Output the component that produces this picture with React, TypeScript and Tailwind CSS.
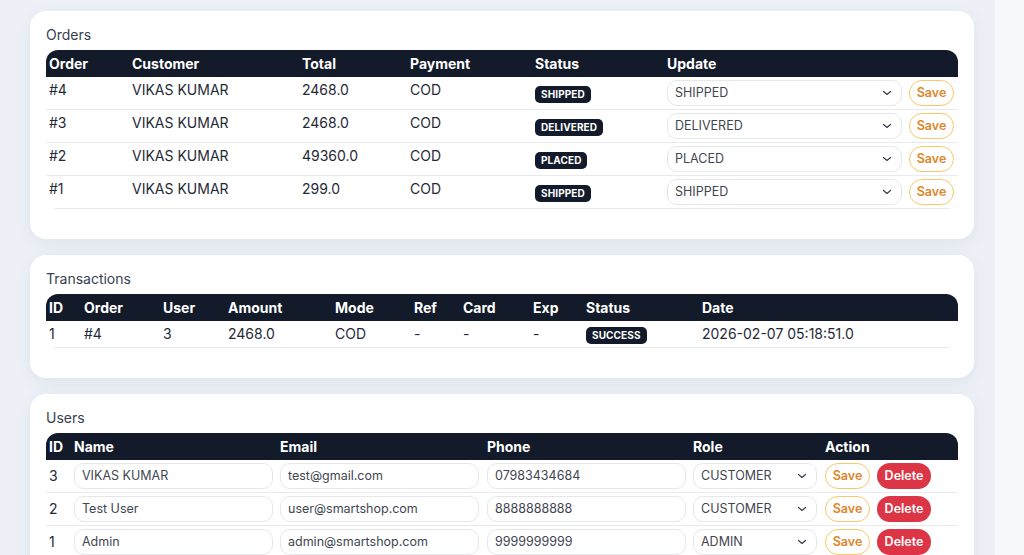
import React from 'react';

const font = { fontFamily: 'Inter, "Liberation Sans", sans-serif' };

const orders = [
  { id: '#4', customer: 'VIKAS KUMAR', total: '2468.0', payment: 'COD', status: 'SHIPPED' },
  { id: '#3', customer: 'VIKAS KUMAR', total: '2468.0', payment: 'COD', status: 'DELIVERED' },
  { id: '#2', customer: 'VIKAS KUMAR', total: '49360.0', payment: 'COD', status: 'PLACED' },
  { id: '#1', customer: 'VIKAS KUMAR', total: '299.0', payment: 'COD', status: 'SHIPPED' },
];

const users = [
  { id: 3, name: 'VIKAS KUMAR', email: 'test@gmail.com', phone: '07983434684', role: 'CUSTOMER' },
  { id: 2, name: 'Test User', email: 'user@smartshop.com', phone: '8888888888', role: 'CUSTOMER' },
  { id: 1, name: 'Admin', email: 'admin@smartshop.com', phone: '9999999999', role: 'ADMIN' },
];

function Chevron() {
  return (
    <svg width="10" height="10" viewBox="0 0 10 10" className="shrink-0">
      <path d="M1.5 3.5 L5 6.5 L8.5 3.5" fill="none" stroke="#374151" strokeWidth="1.2" strokeLinecap="round" strokeLinejoin="round" />
    </svg>
  );
}

function Badge({ text }: { text: string }) {
  return (
    <span className="inline-flex h-[17px] items-center rounded-[5px] bg-[#131a2a] px-[6px] text-[10px] font-bold uppercase tracking-[0.1px] text-white">
      {text}
    </span>
  );
}

function Select({ value, width }: { value: string; width: string }) {
  return (
    <div className={`flex h-[26px] items-center justify-between rounded-[10px] border border-[#e5e7eb] bg-white pl-[7px] pr-[9px] text-[12.5px] text-[#3f4652] ${width}`}>
      <span>{value}</span>
      <Chevron />
    </div>
  );
}

function SaveButton() {
  return (
    <button className="flex h-[26px] w-[45px] shrink-0 items-center justify-center rounded-full border border-[#f9c86b] bg-white text-[12.5px] font-semibold text-[#e0862a]">
      Save
    </button>
  );
}

function Card({ title, children }: { title: string; children: React.ReactNode }) {
  return (
    <section className="rounded-2xl bg-white px-4 pb-[30px] pt-[14px] shadow-[0_4px_18px_rgba(30,50,90,0.07)]">
      <h2 className="mb-[5px] text-[14px] leading-5 text-[#374151]">{title}</h2>
      {children}
    </section>
  );
}

const th = 'h-[27px] bg-[#131a2a] pl-[3px] text-left align-middle text-[14px] font-bold text-white';
const td = 'border-b border-[#e8eaee] py-[3px] pl-[3px] align-middle text-[14px] leading-5 text-[#1f2937]';
const tdLast = 'py-[3px] pl-[3px] align-middle text-[14px] leading-5 text-[#1f2937]';
// order rows: text sits at the top of the cell
const otd = 'border-b border-[#e8eaee] py-[3px] pl-[3px] align-top text-[14px] leading-5 text-[#1f2937]';
const otdLast = 'py-[3px] pl-[3px] align-top text-[14px] leading-5 text-[#1f2937]';

export default function App() {
  return (
    <div className="flex min-h-[555px] bg-[#f6f8fb]" style={font}>
      <main className="flex w-[995px] shrink-0 flex-col gap-4 bg-[#edf1f7] pl-[30px] pr-[21px] pt-[11px]">
        {/* Orders */}
        <Card title="Orders">
          <table className="w-full table-fixed border-separate border-spacing-0">
            <colgroup>
              <col className="w-[83px]" />
              <col className="w-[170px]" />
              <col className="w-[108px]" />
              <col className="w-[125px]" />
              <col className="w-[132px]" />
              <col />
            </colgroup>
            <thead>
              <tr>
                <th className={`${th} rounded-tl-xl`}>Order</th>
                <th className={th}>Customer</th>
                <th className={th}>Total</th>
                <th className={th}>Payment</th>
                <th className={th}>Status</th>
                <th className={`${th} rounded-tr-xl`}>Update</th>
              </tr>
            </thead>
            <tbody>
              {orders.map((o, i) => {
                const c = i === orders.length - 1 ? otdLast : otd;
                return (
                  <tr key={o.id}>
                    <td className={c}>{o.id}</td>
                    <td className={c}>{o.customer}</td>
                    <td className={c}>{o.total}</td>
                    <td className={c}>{o.payment}</td>
                    <td className={c}>
                      <div className="pt-[3px]">
                        <Badge text={o.status} />
                      </div>
                    </td>
                    <td className={c}>
                      <div className="flex items-center gap-[7px]">
                        <Select value={o.status} width="w-[235px]" />
                        <SaveButton />
                      </div>
                    </td>
                  </tr>
                );
              })}
            </tbody>
          </table>
          <div className="mx-2 h-px bg-[#e8eaee]" />
        </Card>

        {/* Transactions */}
        <Card title="Transactions">
          <table className="w-full table-fixed border-separate border-spacing-0">
            <colgroup>
              <col className="w-[35px]" />
              <col className="w-[79px]" />
              <col className="w-[65px]" />
              <col className="w-[107px]" />
              <col className="w-[79px]" />
              <col className="w-[49px]" />
              <col className="w-[70px]" />
              <col className="w-[53px]" />
              <col className="w-[116px]" />
              <col />
            </colgroup>
            <thead>
              <tr>
                <th className={`${th} rounded-tl-xl`}>ID</th>
                <th className={th}>Order</th>
                <th className={th}>User</th>
                <th className={th}>Amount</th>
                <th className={th}>Mode</th>
                <th className={th}>Ref</th>
                <th className={th}>Card</th>
                <th className={th}>Exp</th>
                <th className={th}>Status</th>
                <th className={`${th} rounded-tr-xl`}>Date</th>
              </tr>
            </thead>
            <tbody>
              <tr>
                <td className={tdLast}>1</td>
                <td className={tdLast}>#4</td>
                <td className={tdLast}>3</td>
                <td className={tdLast}>2468.0</td>
                <td className={tdLast}>COD</td>
                <td className={tdLast}>-</td>
                <td className={tdLast}>-</td>
                <td className={tdLast}>-</td>
                <td className={tdLast}><Badge text="SUCCESS" /></td>
                <td className={tdLast}>2026-02-07 05:18:51.0</td>
              </tr>
            </tbody>
          </table>
          <div className="mx-2 h-px bg-[#e8eaee]" />
        </Card>

        {/* Users */}
        <Card title="Users">
          <table className="w-full table-fixed border-separate border-spacing-0">
            <colgroup>
              <col className="w-[25px]" />
              <col className="w-[206px]" />
              <col className="w-[207px]" />
              <col className="w-[206px]" />
              <col className="w-[132px]" />
              <col />
            </colgroup>
            <thead>
              <tr>
                <th className={`${th} rounded-tl-xl`}>ID</th>
                <th className={th}>Name</th>
                <th className={th}>Email</th>
                <th className={th}>Phone</th>
                <th className={th}>Role</th>
                <th className={`${th} rounded-tr-xl`}>Action</th>
              </tr>
            </thead>
            <tbody>
              {users.map((u) => (
                <tr key={u.id}>
                  <td className={td}>{u.id}</td>
                  {[u.name, u.email, u.phone].map((v) => (
                    <td key={v} className={td}>
                      <div className="flex h-[26px] w-[199px] items-center rounded-[10px] border border-[#e5e7eb] bg-white px-[7px] text-[12.5px] text-[#3f4652]">
                        {v}
                      </div>
                    </td>
                  ))}
                  <td className={td}>
                    <Select value={u.role} width="w-[124px]" />
                  </td>
                  <td className={td}>
                    <div className="flex items-center gap-[7px]">
                      <SaveButton />
                      <button className="flex h-[26px] w-[54px] shrink-0 items-center justify-center rounded-full bg-[#dc3545] text-[12.5px] font-semibold text-white">
                        Delete
                      </button>
                    </div>
                  </td>
                </tr>
              ))}
            </tbody>
          </table>
        </Card>
      </main>
      <div className="flex-1" />
    </div>
  );
}
